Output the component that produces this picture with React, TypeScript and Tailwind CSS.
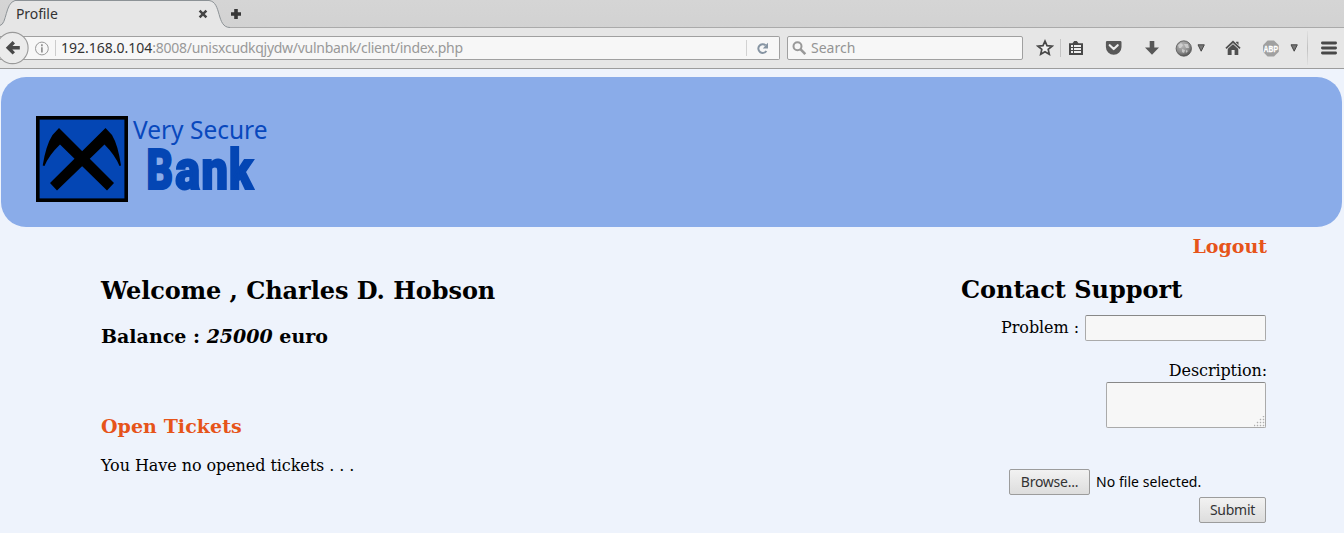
import type { ReactNode } from "react";

function Icon({ w, h, className = "", children }: { w: number; h: number; className?: string; children: ReactNode }) {
  return (
    <svg width={w} height={h} viewBox={`0 0 ${w} ${h}`} className={`block shrink-0 ${className}`}>
      {children}
    </svg>
  );
}

function TabBar() {
  return (
    <div className="relative h-[28px] bg-[#d3d3d3]">
      <svg width="1344" height="28" viewBox="0 0 1344 28" className="absolute left-0 top-0">
        <defs>
          <linearGradient id="strip" x1="0" y1="0" x2="0" y2="1">
            <stop offset="0" stopColor="#d5d5d5" />
            <stop offset="1" stopColor="#d2d2d2" />
          </linearGradient>
        </defs>
        <rect width="1344" height="28" fill="url(#strip)" />
        <path d="M0 28V25.5C7 24 5 3 15 0.5H209C222 2 216 27.5 230 27.5L1344 27.5V28Z" fill="#e6e6e6" />
        <path d="M0 25.5C7 24 5 3 15 0.5H209C222 2 216 27.5 230 27.5" fill="none" stroke="#8c9296" />
        <path d="M230 27.5H1344" stroke="#aaaaaa" />
      </svg>
      <div className="relative flex h-[28px] items-center">
        <span className="ml-4 w-[182px] text-[14px] leading-[20px] tracking-[-0.1px] text-[#333333]">Profile</span>
        <Icon w={10} h={10}>
          <path d="M1.6 1.6L8.4 8.4M8.4 1.6L1.6 8.4" stroke="#444" strokeWidth="2.5" />
        </Icon>
        <Icon w={12} h={12} className="ml-[22px]">
          <path d="M4.2 1H7.8V4.2H11V7.8H7.8V11H4.2V7.8H1V4.2H4.2Z" fill="#383838" />
        </Icon>
      </div>
    </div>
  );
}

function Caret() {
  return (
    <Icon w={8} h={8}>
      <path d="M1 0.8H7.3L4.2 7.2Z" fill="#777" stroke="#484848" />
    </Icon>
  );
}

function NavBar() {
  return (
    <div className="flex h-[41px] items-center border-b border-[#9c9c9c] bg-[#e6e6e6]">
      <div className="relative h-[24px] w-[780px] shrink-0 rounded-r-[2px] border border-l-0 border-[#a0a0a0] bg-[#f7f7f7]">
        <svg width="34" height="34" viewBox="0 0 34 34" className="absolute -left-[4px] -top-[6px]">
          <circle cx="16.5" cy="17" r="15.6" fill="#ebebeb" stroke="#999" strokeWidth="1.1" />
          <path d="M17.8 11.2L12.2 16.8L17.8 22.4M12.5 16.8H23.8" fill="none" stroke="#484848" strokeWidth="3.4" />
        </svg>
        <div className="flex h-full items-center">
          <Icon w={15} h={15} className="ml-[34px]">
            <circle cx="7.9" cy="7.5" r="6.4" fill="none" stroke="#999" />
            <path d="M7.9 3.3V5.2M7.9 6.3V11.4" stroke="#888" strokeWidth="1.6" />
          </Icon>
          <div className="ml-[6px] h-[16px] w-px bg-[#cccccc]" />
          <span className="ml-[5px] w-[684px] whitespace-nowrap text-[14px] leading-[20px] tracking-[-0.285px] text-[#999999]">
            <span className="tracking-[0px] text-[#333333]">192.168.0.104</span>:8008/unisxcudkqjydw/vulnbank/client/index.php
          </span>
          <div className="ml-[1px] h-[16px] w-px bg-[#d2d2d2]" />
          <Icon w={13} h={13} className="ml-[9px]">
            <path d="M9.6 3.2A4.4 4.4 0 1 0 10.4 9" fill="none" stroke="#8795a3" strokeWidth="2" />
            <path d="M12 0.8V6.4H6.8L8.6 4.6L10.2 2.6Z" fill="#8795a3" />
          </Icon>
        </div>
      </div>
      <div className="ml-[7px] flex h-[24px] w-[236px] shrink-0 items-center rounded-[2px] border border-[#a0a0a0] bg-[#f7f7f7]">
        <Icon w={15} h={15} className="ml-[4px]">
          <circle cx="5.5" cy="5.3" r="4" fill="none" stroke="#999" strokeWidth="2" />
          <path d="M8.4 8.2L13.3 13.1" stroke="#999" strokeWidth="2.6" />
        </Icon>
        <span className="ml-[4px] text-[14px] leading-[20px] text-[#949494]">Search</span>
      </div>
      <Icon w={18} h={18} className="ml-[13px]">
        <path d="M9 2.2L11 6.7L16 7.2L12.2 10.4L13.3 15.2L9 12.7L4.7 15.2L5.8 10.4L2 7.2L7 6.7Z" fill="#f2f2f2" stroke="#484848" strokeWidth="1.7" />
      </Icon>
      <div className="ml-[6px] h-[18px] w-px bg-[#c4c4c4]" />
      <Icon w={16} h={16} className="ml-[7px]">
        <path d="M1 3.2H4.5L6.2 1H8.8L10.5 3.2H15V15H1Z" fill="#484848" />
        <path d="M3 5H5V7H3ZM6 5H13V7H6ZM3 8H5V10H3ZM6 8H13V10H6ZM3 11H5V13H3ZM6 11H13V13H6Z" fill="#eeeeee" />
      </Icon>
      <Icon w={17} h={16} className="ml-[21px]">
        <path d="M2.2 1H15.2Q16.5 1 16.5 2.3V7A7.8 7.8 0 0 1 0.9 7V2.3Q0.9 1 2.2 1Z" fill="#585858" />
        <path d="M4.7 5.2L8.7 9L12.7 5.2" fill="none" stroke="#eeeeee" strokeWidth="2.2" strokeLinecap="round" strokeLinejoin="round" />
      </Icon>
      <Icon w={16} h={16} className="ml-[22px]">
        <path d="M5.7 1H10.3V7.5H15L8 14.7L1 7.5H5.7Z" fill="#585858" />
      </Icon>
      <Icon w={17} h={17} className="ml-[15px]">
        <defs>
          <radialGradient id="globe" cx="0.4" cy="0.3" r="0.75">
            <stop offset="0" stopColor="#b8b8b8" />
            <stop offset="0.6" stopColor="#8c8c8c" />
            <stop offset="1" stopColor="#4c4c4c" />
          </radialGradient>
        </defs>
        <circle cx="8.8" cy="8.5" r="7.7" fill="url(#globe)" stroke="#555" strokeWidth="0.8" />
        <path d="M3 5L6 3L8 5L6 8L4 8ZM9 4L13 4L14 8L11 8ZM7 9L10 10L9 13L7 12ZM11 10L13 11L11 13Z" fill="#d8d8d8" opacity="0.75" />
      </Icon>
      <div className="ml-[5px]"><Caret /></div>
      <Icon w={16} h={16} className="ml-[20px]">
        <path d="M11 1.8H13.5V6H11ZM2.7 8.5L8 3.7L13.3 8.5V15H9.6V10H6.6V15H2.7Z" fill="#505050" />
        <path d="M1 8.4L8 1.8L15 8.4" fill="none" stroke="#e6e6e6" strokeWidth="3.2" />
        <path d="M1 8.4L8 1.8L15 8.4" fill="none" stroke="#505050" strokeWidth="1.8" />
      </Icon>
      <Icon w={17} h={17} className="ml-[21px]">
        <path d="M5.6 0.6H12L16.8 5.2V11.8L12 16.4H5.6L1 11.8V5.2Z" fill="#a0a0a0" />
        <text x="1.6" y="11.9" textLength="14.4" lengthAdjust="spacingAndGlyphs" fontSize="9.5" fontWeight="700" fill="#ffffff" stroke="#ffffff" strokeWidth="0.3" fontFamily="Liberation Sans, sans-serif">ABP</text>
      </Icon>
      <div className="ml-[11px]"><Caret /></div>
      <div className="ml-[9px] h-[34px] w-px bg-gradient-to-b from-[#e0e0e0] via-[#c0c0c0] to-[#e0e0e0]" />
      <Icon w={16} h={14} className="ml-[13px]">
        <path d="M1.4 2H14.6M1.4 7H14.6M1.4 12H14.6" stroke="#484848" strokeWidth="2.8" strokeLinecap="round" />
      </Icon>
    </div>
  );
}

function Logo() {
  return (
    <svg width="240" height="96" viewBox="0 0 240 96" className="block">
      <rect x="1.8" y="1.8" width="88.4" height="82.4" fill="#0446b4" stroke="#000" strokeWidth="3.6" />
      <path d="M23 12L78 67L71 74.5L24 28.5Q13 39 8.5 50L6.7 49.5Q10 29 16.5 19Z" fill="#000" />
      <path d="M69.5 12L14 67L21 74.5L68.5 28.5Q79 39 83.5 50L85 49.5Q82 29 76 19Z" fill="#000" />
      <text x="97" y="23.3" textLength="134.5" lengthAdjust="spacingAndGlyphs" fontSize="24.5" fill="#0848bd" fontFamily="Noto Sans, sans-serif">Very Secure</text>
      <g transform="translate(110.6 73) scale(1 1.27)">
        <text y="0" fontSize="43" fontWeight="900" fill="#0446b4" stroke="#0446b4" strokeWidth="1.6" fontFamily="Roboto, sans-serif">
          <tspan x="0" textLength="26.5" lengthAdjust="spacingAndGlyphs">B</tspan>
          <tspan x="28.6" textLength="24.8" lengthAdjust="spacingAndGlyphs">a</tspan>
          <tspan x="54.8" textLength="26.5" lengthAdjust="spacingAndGlyphs">n</tspan>
          <tspan x="82.3" textLength="24" lengthAdjust="spacingAndGlyphs">k</tspan>
        </text>
      </g>
    </svg>
  );
}

const button =
  "box-border h-[26px] rounded-[2px] border border-[#9c9c9c] bg-gradient-to-b from-[#f2f2f2] to-[#dddddd] text-center font-['Noto_Sans',sans-serif] text-[14px] leading-[22px] tracking-[-0.25px] text-[#333333]";

export default function App() {
  return (
    <div className="h-[533px] w-[1344px] overflow-hidden bg-[#eef3fc] font-['Noto_Sans',sans-serif]">
      <TabBar />
      <NavBar />
      <main className="font-['DejaVu_Serif',serif] text-black">
        <header className="ml-px mt-[8px] h-[150px] w-[1341px] rounded-[25px] bg-[#8aace9] pl-[35px] pt-[39px]">
          <Logo />
        </header>
        <div className="flex justify-between pl-[101px] pr-[77px]">
          <section>
            <h2 className="mt-[50px] whitespace-nowrap text-[24px] font-bold leading-[28px] tracking-[-0.06px]">Welcome , Charles D. Hobson</h2>
            <h3 className="mt-[19px] whitespace-nowrap text-[19px] font-bold leading-[24px]">
              Balance : <em>25000</em> euro
            </h3>
            <h3 className="mt-[66px] text-[19px] font-bold leading-[24px] tracking-[0.06px] text-[#e6541a]">Open Tickets</h3>
            <p className="mt-[18px] text-[16px] leading-[20px] tracking-[-0.07px]">You Have no opened tickets . . .</p>
          </section>
          <section className="flex w-[306px] flex-col items-end pt-[7px]">
            <a className="text-[19px] font-bold leading-[24px] text-[#e6541a]">Logout</a>
            <h2 className="mt-[18px] self-start whitespace-nowrap text-[24px] font-bold leading-[28px]">Contact Support</h2>
            <label className="mr-px mt-[11px] flex h-[26px] items-center text-[16px] leading-[20px]">
              <span className="mr-[6px] tracking-[-0.06px]">Problem :</span>
              <input className="h-[26px] w-[181px] rounded-[2px] border border-[#aaaaaa] border-t-[#888888] bg-[#f7f7f7]" />
            </label>
            <label htmlFor="description" className="mt-[20px] text-[16px] leading-[20px] tracking-[-0.1px]">Description:</label>
            <div className="relative mr-px mt-[1px] h-[46px] w-[160px]">
              <textarea id="description" className="block h-[46px] w-[160px] resize-none rounded-[2px] border border-[#aaaaaa] border-t-[#888888] bg-[#f7f7f7]" />
              <svg width="11" height="11" viewBox="0 0 11 11" className="absolute bottom-[1px] right-[1px]">
                <path d="M9 0h1v1h-1zM6 3h1v1h-1zM9 3h1v1h-1zM3 6h1v1h-1zM6 6h1v1h-1zM9 6h1v1h-1zM0 9h1v1h-1zM3 9h1v1h-1zM6 9h1v1h-1zM9 9h1v1h-1z" fill="#999" stroke="#bbb" strokeWidth="0.5" />
              </svg>
            </div>
            <div className="mt-[41px] flex w-[258px] items-center font-['Noto_Sans',sans-serif] text-[14px]">
              <button className={`${button} w-[81px]`}>Browse...</button>
              <span className="ml-[6px] whitespace-nowrap leading-[20px] tracking-[0.05px]">No file selected.</span>
            </div>
            <button className={`${button} mr-px mt-[2px] w-[67px]`}>Submit</button>
          </section>
        </div>
      </main>
    </div>
  );
}
